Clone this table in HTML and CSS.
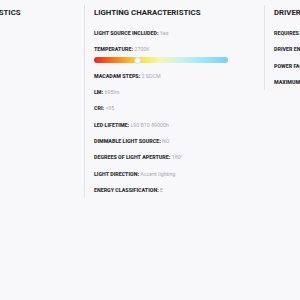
FILE: index.html
```html
<!DOCTYPE html>
<html>
<head>
<meta charset="utf-8">
<link rel="stylesheet" href="styles.css">
</head>
<body>
<div class="specs">
  <section class="col">
    <h2 class="title">PRODUCT CHARACTERISTICS</h2>
  </section>
  <section class="col">
    <h2 class="title">LIGHTING CHARACTERISTICS</h2>
    <div class="row"><b>LIGHT SOURCE INCLUDED:</b> <span>Yes</span></div>
    <div class="row"><b>TEMPERATURE:</b> <span>2700K</span></div>
    <div class="bar"><i class="knob"></i></div>
    <div class="row"><b>MACADAM STEPS:</b> <span>2 SDCM</span></div>
    <div class="row"><b>LM:</b> <span>695lm</span></div>
    <div class="row"><b>CRI:</b> <span>&gt;95</span></div>
    <div class="row"><b>LED LIFETIME:</b> <span>L90 B10 89000h</span></div>
    <div class="row"><b>DIMMABLE LIGHT SOURCE:</b> <span>NO</span></div>
    <div class="row"><b>DEGREES OF LIGHT APERTURE:</b> <span>180°</span></div>
    <div class="row"><b>LIGHT DIRECTION:</b> <span>Accent lighting</span></div>
    <div class="row"><b>ENERGY CLASSIFICATION:</b> <span>E</span></div>
  </section>
  <section class="col">
    <h2 class="title">DRIVER CHARACTERISTICS</h2>
    <div class="row"><b>REQUIRES DRIVER:</b> <span>Yes</span></div>
    <div class="row"><b>DRIVER ENCLOSED:</b> <span>Yes</span></div>
    <div class="row"><b>POWER FACTOR:</b> <span>0.9</span></div>
    <div class="row"><b>MAXIMUM POWER:</b> <span>10W</span></div>
  </section>
</div>
</body>
</html>
```

FILE: styles.css
```css
html, body {
  margin: 0;
  padding: 0;
  background: #f8f8fa;
  overflow: hidden;
}
body {
  font-family: Roboto, "Liberation Sans", sans-serif;
  color: #2b2b2b;
}
.specs {
  display: flex;
  align-items: flex-start;
  margin-left: -96px;
  margin-top: 5px;
  width: 600px;
}
.col {
  flex: 0 0 180px;
  box-sizing: border-box;
  border-left: 1px solid #e3e3e6;
  padding: 2px 0 0 9px;
}
.title {
  margin: 0 0 6px;
  font-size: 7.8px;
  line-height: 12px;
  font-weight: 700;
  white-space: nowrap;
  color: #222;
}
.row {
  height: 16.33px;
  line-height: 16.33px;
  font-size: 5.3px;
  white-space: nowrap;
}
.row b {
  font-weight: 900;
  color: #333;
}
.row span {
  color: #a9a9ad;
}
.bar {
  position: relative;
  width: 134px;
  height: 6px;
  border-radius: 3px;
  margin: -1px 0 5px;
  background: linear-gradient(to right, #e5261c 0%, #f36a1d 12%, #fbb22a 25%, #fbe85a 38%, #f3f6b8 50%, #c7f3ec 65%, #9be6f8 82%, #7ccff3 100%);
}
.knob {
  position: absolute;
  left: 40px;
  top: 0;
  width: 5px;
  height: 5px;
  border-radius: 50%;
  background: #fff;
  border: 0.5px solid #ddd;
}
```
